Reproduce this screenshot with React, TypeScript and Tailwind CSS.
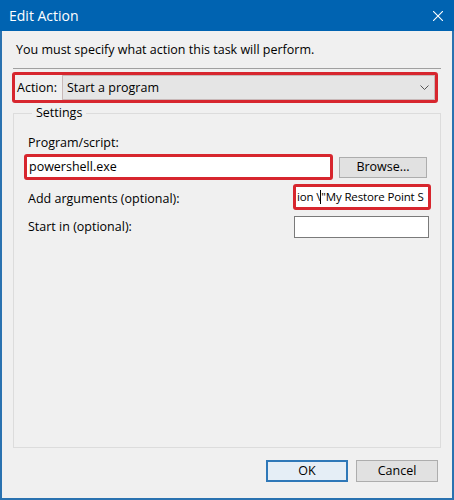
import React from "react";

const font = "font-['Open_Sans','Noto_Sans',sans-serif]";

function RedBox({ className, children }: { className?: string; children: React.ReactNode }) {
  return (
    <div className={`border-[3px] border-[#d7262e] rounded-[3px] ${className ?? ""}`}>{children}</div>
  );
}

export default function App() {
  return (
    <div className={`w-[454px] h-[500px] flex flex-col bg-[#f0f0f0] text-[12.5px] leading-4 text-black ${font}`}>
      {/* title bar */}
      <div className="h-[31px] shrink-0 bg-[#0063b1] flex items-center justify-between pl-[9px] pr-[11px] text-white text-[14px]">
        <span>Edit Action</span>
        <svg width="10" height="10" viewBox="0 0 10 10" stroke="white" strokeWidth="1.1">
          <path d="M0 0L10 10M10 0L0 10" />
        </svg>
      </div>

      <div className="flex-1 flex flex-col border-x-2 border-b-2 border-[#2a72b0] px-[11px]">
        <div className="mt-[11px] pl-[3px]">You must specify what action this task will perform.</div>

        <div className="mt-[10px] h-px bg-[#a0a0a0]" />

        {/* action row */}
        <RedBox className="mt-[3px] -ml-px w-[426px] h-[31px] flex items-stretch">
          <div className="w-[47px] flex items-center pl-[2px] bg-[#f0f0f0]">Action:</div>
          <div className="flex-1 flex items-center justify-between border border-[#c8b8b8] bg-[#e5e5e5] pl-[4px] pr-[5px]">
            <span>Start a program</span>
            <svg width="9" height="5" viewBox="0 0 9 5" fill="none" stroke="#555" strokeWidth="1">
              <path d="M0.5 0.5L4.5 4.5L8.5 0.5" />
            </svg>
          </div>
        </RedBox>

        {/* settings group */}
        <fieldset className="mt-[2px] h-[343px] border border-[#dcdcdc] pl-[14px] pr-[9px]">
          <legend className="ml-[4px] px-[4px]">Settings</legend>

          <div className="mt-[14px]">Program/script:</div>

          <div className="mt-[3px] flex items-center h-[26px]">
            <RedBox className="-ml-[4px] w-[309px] h-[26px] bg-white flex items-center pl-[2px]">
              <span>powershell.exe</span>
            </RedBox>
            <button className="ml-[6px] w-[88px] h-[21px] bg-[#e1e1e1] border border-[#adadad]">Browse...</button>
          </div>

          <div className="mt-[4px] flex h-[26px]">
            <div className="pt-[7px]">Add arguments (optional):</div>
            <RedBox className="ml-auto w-[138px] h-[26px] bg-white flex items-center overflow-hidden">
              <span className="whitespace-nowrap pl-[1px] flex items-center text-[11.5px] tracking-[-0.15px]">
                <span>ion \</span>
                <span className="inline-block w-px h-[14px] bg-black" />
                <span>"My Restore Point S</span>
              </span>
            </RedBox>
          </div>

          <div className="mt-[6px] flex items-center h-[22px]">
            <div>Start in (optional):</div>
            <div className="ml-auto mr-[2px] w-[135px] h-[22px] bg-white border border-[#7a7a7a]" />
          </div>
        </fieldset>

        {/* buttons */}
        <div className="mt-[12px] flex justify-end gap-[8px] pr-[3px]">
          <button className="w-[82px] h-[22px] bg-[#e5eef6] border-2 border-[#2f78b8]">OK</button>
          <button className="w-[82px] h-[22px] bg-[#e1e1e1] border border-[#adadad]">Cancel</button>
        </div>
      </div>
    </div>
  );
}
